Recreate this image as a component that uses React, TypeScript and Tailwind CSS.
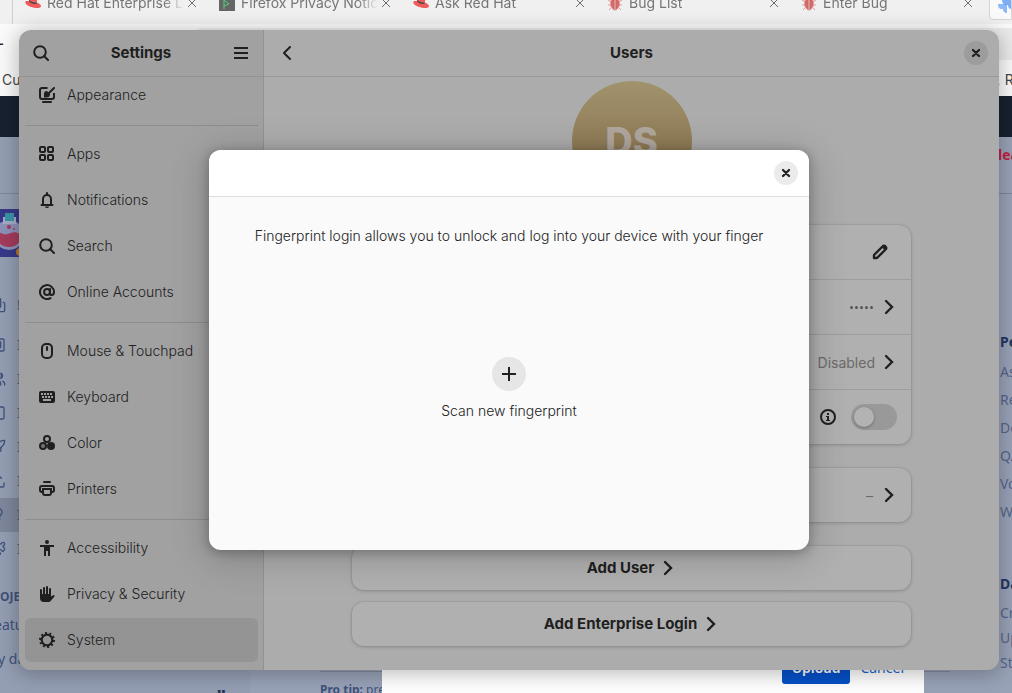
import React, { useState } from 'react';
import { Columns2, Copy, Lightbulb, Puzzle, Rocket, SquareKanban, Upload, Users } from 'lucide-react';

type IconProps = { className?: string };

const SearchIcon = ({ className = "w-4 h-4" }: IconProps) => (
    <svg className={className} viewBox="0 0 16 16" fill="none" stroke="currentColor" strokeWidth={2}>
        <circle cx="7" cy="7" r="5.8" />
        <path d="M11 11l4 4" strokeLinecap="round" />
    </svg>
);

const MenuIcon = () => (
    <svg className="w-4 h-4" viewBox="0 0 16 16" fill="currentColor">
        <path d="M1 2h14v2H1zM1 7h14v2H1zM1 12h14v2H1z" />
    </svg>
);

const BackIcon = () => (
    <svg className="w-4 h-4" viewBox="0 0 16 16" fill="none" stroke="currentColor" strokeWidth={2} strokeLinecap="round" strokeLinejoin="round">
        <path d="M11 2L5 8l6 6" />
    </svg>
);

const NextIcon = () => (
    <svg className="w-4 h-4" viewBox="0 0 16 16" fill="none" stroke="currentColor" strokeWidth={2.4} strokeLinecap="round" strokeLinejoin="miter">
        <path d="M5 2l6 6-6 6" />
    </svg>
);

const CloseIcon = () => (
    <svg className="w-4 h-4" viewBox="0 0 16 16" fill="none" stroke="currentColor" strokeWidth={2.3} strokeLinecap="round">
        <path d="M5 5l6 6M11 5l-6 6" />
    </svg>
);

const AppearanceIcon = () => (
    <svg className="w-4 h-4" viewBox="0 0 16 16" fill="none" stroke="currentColor" strokeWidth={2}>
        <path d="M8.500 1H3a2 2 0 0 0-2 2v7a2 2 0 0 0 2 2h10a2 2 0 0 0 2-2V6" />
        <path d="M4 15h8" strokeLinecap="round" />
        <path d="M9.500 6.500l5.500-5.500" strokeLinecap="round" />
        <path d="M8 4a3 3 0 0 0-3 3v3.500h2.500a3.500 3.500 0 0 0 3.500-3.500z" fill="currentColor" stroke="none" />
    </svg>
);

const AppsIcon = () => (
    <svg className="w-4 h-4" viewBox="0 0 16 16" fill="none" stroke="currentColor" strokeWidth={2}>
        <rect x="1" y="1" width="5" height="5" rx="1" />
        <rect x="9" y="1" width="5" height="5" rx="1" />
        <rect x="1" y="9" width="5" height="5" rx="1" />
        <rect x="9" y="9" width="5" height="5" rx="1" />
    </svg>
);

const BellIcon = () => (
    <svg className="w-4 h-4" viewBox="0 0 16 16" fill="none" stroke="currentColor" strokeWidth={2}>
        <path d="M4 12V7a4 4 0 0 1 8 0v5" />
        <path d="M2.500 13h11" strokeLinecap="round" />
        <path d="M8 1v1" strokeLinecap="round" />
        <path d="M6 14.500h4a2 1.500 0 0 1-4 0z" fill="currentColor" stroke="none" />
    </svg>
);

const AtIcon = () => (
    <svg className="w-4 h-4" viewBox="0 0 16 16" fill="none" stroke="currentColor" strokeWidth={2}>
        <circle cx="8" cy="8" r="2.900" />
        <path d="M11 5v4.200c0 1.200.7 1.800 1.600 1.800 1.200 0 2.400-1 2.400-3a7 7 0 1 0-3.500 6.100" strokeLinecap="round" />
    </svg>
);

const MouseIcon = () => (
    <svg className="w-4 h-4" viewBox="0 0 16 16" fill="none" stroke="currentColor" strokeWidth={2}>
        <rect x="3" y="1" width="10" height="14" rx="4" />
        <path d="M8 4v3" strokeLinecap="round" />
    </svg>
);

const KeyboardIcon = () => (
    <svg className="w-4 h-4" viewBox="0 0 16 16" fill="currentColor" fillRule="evenodd">
        <path d="M2 2h12a2 2 0 0 1 2 2v8a2 2 0 0 1-2 2H2a2 2 0 0 1-2-2V4a2 2 0 0 1 2-2zM2 4v2h2V4zM5 4v2h2V4zM8 4v2h2V4zM11 4v2h2V4zM3 7v2h2V7zM6 7v2h2V7zM9 7v2h2V7zM12 7v2h2V7zM4 10v2h8v-2z" />
    </svg>
);

const ColorIcon = () => (
    <svg className="w-4 h-4" viewBox="0 0 16 16" fill="none" stroke="currentColor" strokeWidth={2}>
        <circle cx="8" cy="4" r="3" />
        <circle cx="4" cy="11" r="3" fill="currentColor" fillOpacity={0.35} />
        <circle cx="12" cy="11" r="3" fill="currentColor" />
    </svg>
);

const PrinterIcon = () => (
    <svg className="w-4 h-4" viewBox="0 0 16 16" fill="none" stroke="currentColor" strokeWidth={2}>
        <path d="M5 1h6" strokeLinecap="round" />
        <path d="M3 11a2 2 0 0 1-2-2V7a2 2 0 0 1 2-2h10a2 2 0 0 1 2 2v2a2 2 0 0 1-2 2" />
        <path d="M4 8h8v4a2 2 0 0 1-2 2H6a2 2 0 0 1-2-2z" />
    </svg>
);

const AccessibilityIcon = () => (
    <svg className="w-4 h-4" viewBox="0 0 16 16" fill="currentColor">
        <circle cx="8" cy="2" r="2" />
        <path d="M1 5h14v2h-4v9H9v-5H7v5H5V7H1z" />
    </svg>
);

const HandIcon = () => (
    <svg className="w-4 h-4" viewBox="0 0 16 16" fill="none" stroke="currentColor" strokeWidth={2} strokeLinecap="round">
        <path d="M2 9V4M5 9V2M8 9V1M11 9V3" />
        <path d="M1 8h11v2.500L14.500 9c1 0 1.500.8.8 1.700L12 14.500c-.8 1-1.500 1.500-3 1.500H5a4 4 0 0 1-4-4z" fill="currentColor" stroke="none" />
    </svg>
);

const GearIcon = () => (
    <svg className="w-4 h-4" viewBox="0 0 16 16" fill="none" stroke="currentColor">
        <circle cx="8" cy="8" r="5.300" strokeWidth={2.2} />
        <circle cx="8" cy="8" r="7" strokeWidth={2} strokeDasharray="2 2.398" />
    </svg>
);

const PencilIcon = () => (
    <svg className="w-4 h-4" viewBox="0 0 16 16" fill="none" stroke="currentColor" strokeWidth={2.4} strokeLinejoin="round">
        <path d="M2 14v-3l8.500-8.500a2.100 2.100 0 0 1 3 3L5 14z" />
        <path d="M9.500 3l3.500 3.500 2-2.500-2.500-2.500z" fill="currentColor" stroke="none" />
    </svg>
);

const InfoIcon = () => (
    <svg className="w-4 h-4" viewBox="0 0 16 16" fill="none" stroke="currentColor" strokeWidth={2}>
        <circle cx="8" cy="8" r="7" />
        <path d="M7 4h2v2H7zM6 7h3v4h1v1H6v-1h1V8H6z" fill="currentColor" stroke="none" />
    </svg>
);

const HatIcon = () => (
    <svg className="w-4 h-4 shrink-0" viewBox="0 0 16 16">
        <path d="M4 6l1-4c.4-1 1.400-1 2.600-.5l3.600 1.300c1 .4 1.200 1 1 2l-.4 2.600C14.500 8.500 16 9.800 16 11c0 1.500-2 2.200-5 2C6 12.600.3 10 .2 7.300 0 6.200 1.700 5.700 4 6z" fill="#f05a5a" />
        <path d="M4 6c1 2 4 3.500 7.500 2.800l.3-1.400c-3 .6-6-.6-7.500-2.600z" fill="#4a4a4a" />
    </svg>
);

const BugIcon = () => (
    <svg className="w-4 h-4 shrink-0" viewBox="0 0 16 16" fill="none" stroke="#e69a9a" strokeWidth={1}>
        <path d="M5 4L2 1M11 4l3-3M4 7L1 5M12 7l3-2M4 10H1M12 10h3M5 12l-3 3M11 12l3 3" />
        <ellipse cx="8" cy="8.500" rx="4.500" ry="6.500" fill="#cf6a6a" />
        <path d="M8 3v11" stroke="#eeb5b5" />
    </svg>
);

const TerminalIcon = () => (
    <svg className="w-4 h-4 shrink-0" viewBox="0 0 16 16">
        <rect width="16" height="16" fill="#666" />
        <path d="M5 4v10M5 5l5 4-5 2" stroke="#4fd07a" fill="none" />
    </svg>
);

const FlaskLogo = () => (
    <svg className="w-12 h-12" viewBox="0 0 48 48">
        <rect width="48" height="48" fill="#38388a" />
        <circle cx="37" cy="26" r="15" fill="#8d92b8" />
        <path d="M31 8h13v7H31z" fill="#a5acc8" />
        <path d="M33 4h9v8h-9z" fill="#3b95a6" />
        <path d="M23 25c5-4 8 2 13 0s8-3 13 1c0 8-5 12-12 12s-13-5-14-13z" fill="#a33c5c" />
        <circle cx="37" cy="18" r="2" fill="#a33c5c" />
        <circle cx="42" cy="20" r="1" fill="#a33c5c" />
        <circle cx="48" cy="43" r="4" fill="#b9752b" />
    </svg>
);

const JiraLogo = () => (
    <svg className="w-5 h-5 shrink-0" viewBox="0 0 20 20" fill="#5b9bf5">
        <path d="M9 1h10v10c-3 0-4-2-4-4h-2c-3 0-4-3-4-6z" />
        <path d="M4 6h10v10c-3 0-4-2-4-4H8c-3 0-4-3-4-6z" opacity=".8" />
        <path d="M0 11h9v9c-3 0-4-2-4-4H4c-3 0-4-2-4-5z" opacity=".7" />
    </svg>
);

const tabs = [
    { title: "Red Hat Enterprise L", icon: HatIcon },
    { title: "Firefox Privacy Notic", icon: TerminalIcon },
    { title: "Ask Red Hat", icon: HatIcon },
    { title: "Bug List", icon: BugIcon },
    { title: "Enter Bug", icon: BugIcon }
];

const projectLinks = [SquareKanban, Users, Columns2, Rocket, Upload, Lightbulb, Puzzle];

const panels = [
    [{ name: "Appearance", icon: AppearanceIcon }],
    [
        { name: "Apps", icon: AppsIcon },
        { name: "Notifications", icon: BellIcon },
        { name: "Search", icon: SearchIcon },
        { name: "Online Accounts", icon: AtIcon }
    ],
    [
        { name: "Mouse & Touchpad", icon: MouseIcon },
        { name: "Keyboard", icon: KeyboardIcon },
        { name: "Color", icon: ColorIcon },
        { name: "Printers", icon: PrinterIcon }
    ],
    [
        { name: "Accessibility", icon: AccessibilityIcon },
        { name: "Privacy & Security", icon: HandIcon },
        { name: "System", icon: GearIcon }
    ]
];

function BrowserPage() {
    return (
        <div className="flex h-screen flex-col overflow-hidden bg-white">
            {/* Tab strip */}
            <div className="-mt-2 flex h-8 shrink-0 bg-[#f0f0f0] text-sm leading-6 text-[#757575]">
                <div className="w-[13px] shrink-0 border-r border-[#cfcfcf]" />
                {tabs.map((tab) => (
                    <div key={tab.title} className="flex h-[22px] w-[194px] shrink-0 items-center pl-3">
                        <tab.icon />
                        <span className="ml-[6px] flex-1 overflow-hidden whitespace-nowrap [mask-image:linear-gradient(to_right,black_85%,transparent)]">{tab.title}</span>
                        <button aria-label="Close tab" className="flex h-4 w-4 shrink-0 items-center justify-center mr-[7px]">
                            <svg className="h-2 w-2" viewBox="0 0 8 8" stroke="#6d6d6d" fill="none"><path d="M0 0l8 8M8 0L0 8" /></svg>
                        </button>
                    </div>
                ))}
                <div className="ml-[6px] h-7 flex-1 overflow-hidden rounded-bl border border-[#d5d5d5] bg-[#fafafa] pl-2">
                    <JiraLogo />
                </div>
            </div>
            {/* Address bar */}
            <div className="flex h-9 shrink-0 items-center bg-[#fafafa] pt-1">
                <span className="-ml-1 w-[199px] text-lg leading-8 text-[#222]">-</span>
                <div className="h-8 flex-1 rounded-l-md bg-[#ebebeb]" />
            </div>
            {/* Bookmarks */}
            <div className="flex h-9 shrink-0 items-center justify-between overflow-hidden bg-[#fafafa] pl-[2px] pt-1 text-sm text-[#444]">
                <span>Cu</span>
                <span className="w-4 whitespace-nowrap"><b className="text-[#d02030]">,</b> R</span>
            </div>
            <div className="h-[41px] shrink-0 bg-[#172130]" />
            <div className="flex min-h-0 flex-1 bg-[#98a2b7] font-['Noto_Sans',sans-serif] text-sm text-[#3f5279]">
                <aside className="w-[250px] shrink-0 bg-[#949eb3]">
                    <div className="h-[57px] border-b border-[#7d879c]" />
                    <div className="-ml-7 mt-[15px] h-12"><FlaskLogo /></div>
                    <div className="mt-[31px] flex h-[34px] items-center">
                        <Copy className="-ml-[10px] h-4 w-4 rotate-180" /><span className="ml-[11px]">!</span>
                    </div>
                    <ul className="pt-[6px]">
                        {projectLinks.map((Icon, i) => (
                            <li key={i} className={i === 5 ? "flex h-[34px] items-center bg-[#7e879c]" : "flex h-[34px] items-center"}>
                                <Icon className="-ml-[10px] h-4 w-4" fill={i === 1 ? "currentColor" : "none"} />
                                <span className="ml-[11px]">I</span>
                            </li>
                        ))}
                    </ul>
                    <h3 className="mt-[21px] text-xs font-bold leading-[20px]">OJE</h3>
                    <a href="#" className="-ml-[6px] mt-[6px] block leading-6">eatu</a>
                    <a href="#" className="-ml-[2px] mt-[10px] block leading-6">y da</a>
                    <div className="mt-[14px] flex justify-end pr-6 text-xl font-bold leading-6 text-[#26355a]">"</div>
                </aside>
                <main className="flex min-w-0 flex-1 flex-col justify-end">
                    <div className="flex items-end pl-[70px] pr-[50px]">
                        <p className="h-[22px] w-[62px] overflow-hidden whitespace-nowrap border-t border-[#7d879c] pt-[10px] text-xs leading-4"><b>Pro tip:</b> pre</p>
                        <div className="flex flex-1 items-start justify-end gap-[10px] bg-white pb-[9px] pr-[20px]">
                            <button className="h-8 rounded-[3px] bg-[#0550c8] px-[10px] font-semibold text-white">Upload</button>
                            <button className="h-8 text-[#1a68c4]">Cancel</button>
                        </div>
                        <div className="h-[22px] w-[26px] border-t border-[#7d879c]" />
                    </div>
                </main>
                <aside className="w-3 shrink-0 whitespace-nowrap text-[#56658a]">
                    <div className="-ml-[2px] h-[57px] border-b border-[#7d879c] pt-2 font-bold leading-5 text-[#c02040]">lea</div>
                    <h3 className="mt-[138px] font-bold leading-5 text-[#233662]">Pe</h3>
                    <ul className="mt-[6px] leading-7">
                        <li>As</li>
                        <li>Re</li>
                        <li>De</li>
                        <li>QA</li>
                        <li>Vo</li>
                        <li>W</li>
                    </ul>
                    <h3 className="mt-[48px] font-bold leading-5 text-[#233662]">Da</h3>
                    <ul className="mt-[6px] leading-[25px]">
                        <li>Cr</li>
                        <li>Up</li>
                        <li>St</li>
                    </ul>
                </aside>
            </div>
        </div>
    );
}

function Sidebar() {
    return (
        <aside className="flex w-[245px] shrink-0 flex-col border-r border-[#929292] bg-[#a1a1a1]">
            <header className="flex h-[47px] shrink-0 items-center justify-between border-b border-[#929292] px-[14px]">
                <button aria-label="Search settings"><SearchIcon /></button>
                <h1 className="text-[15px] font-bold">Settings</h1>
                <button aria-label="Main menu"><MenuIcon /></button>
            </header>
            <nav className="min-h-0 flex-1 overflow-hidden pl-[6px] pr-[5px]">
                <div className="-mt-[5px]">
                    {panels.map((group, i) => (
                        <ul key={i} className={i > 0 ? "mt-[7px] border-t border-[#8d8d8d] pt-[5px]" : ""}>
                            {group.map((panel) => (
                                <li key={panel.name} className="py-px">
                                    <a
                                        href="#"
                                        className={`flex h-11 items-center gap-3 rounded-md pl-[14px] ${panel.name === "System" ? "bg-[#949494]" : ""}`}
                                    >
                                        <panel.icon />
                                        <span className="pb-[2px] font-light text-[#222]">{panel.name}</span>
                                    </a>
                                </li>
                            ))}
                        </ul>
                    ))}
                </div>
            </nav>
        </aside>
    );
}

function UserPanel() {
    const [autoLogin, setAutoLogin] = useState(false);

    return (
        <section className="flex min-w-0 flex-1 flex-col bg-[#acacac]">
            <header className="flex h-[47px] shrink-0 items-center justify-between border-b border-[#999] px-[11px]">
                <button aria-label="Back" className="flex h-6 w-6 items-center justify-center"><BackIcon /></button>
                <h2 className="text-[15px] font-bold">Users</h2>
                <button aria-label="Close" className="flex h-6 w-6 items-center justify-center rounded-full bg-[#9c9c9c]"><CloseIcon /></button>
            </header>
            <div className="mx-auto min-h-0 w-full max-w-[559px] flex-1 pt-1">
                <div className="mx-auto mb-6 flex h-[120px] w-[120px] items-center justify-center rounded-full bg-linear-to-b from-[#a1936d] to-[#806844] text-[38px] font-extrabold text-[#b0a79f]">
                    DS
                </div>
                <div className="mb-6 divide-y divide-[#9d9d9d] rounded-xl bg-[#b0b0b0] shadow-[0_0_0_1px_rgba(0,0,0,0.04),0_1px_3px_1px_rgba(0,0,0,0.12)]">
                    <div className="flex h-[55px] items-center justify-end pr-[23px]">
                        <button aria-label="Edit name"><PencilIcon /></button>
                    </div>
                    <button aria-label="Password" className="flex h-[55px] w-full items-center justify-end gap-[6px] pr-[14px] text-[#6a6a6a]">
                        <span className="flex gap-[2px] pr-[2px]">
                            {[0, 1, 2, 3, 4].map((n) => <i key={n} className="h-[3px] w-[3px] rounded-full bg-[#555]" />)}
                        </span>
                        <span className="text-[#222]"><NextIcon /></span>
                    </button>
                    <button className="flex h-[55px] w-full items-center justify-end gap-[6px] pr-[14px] text-[#6a6a6a]">
                        <span>Disabled</span>
                        <span className="text-[#222]"><NextIcon /></span>
                    </button>
                    <div className="flex h-[54px] items-center justify-end gap-[15px] pr-[14px]">
                        <button aria-label="About automatic login"><InfoIcon /></button>
                        <input
                            type="checkbox"
                            role="switch"
                            aria-label="Automatic login"
                            checked={autoLogin}
                            onChange={(e) => setAutoLogin(e.target.checked)}
                            className="h-[26px] w-[46px] appearance-none rounded-full bg-[#999] p-[3px] before:block before:h-5 before:w-5 before:rounded-full before:bg-[#b3b3b3] before:shadow-[0_1px_3px_rgba(0,0,0,0.3)] checked:before:ml-5"
                        />
                    </div>
                </div>
                <button className="mb-6 flex h-[54px] w-full items-center justify-end gap-2 rounded-xl bg-[#b0b0b0] pr-[14px] shadow-[0_0_0_1px_rgba(0,0,0,0.04),0_1px_3px_1px_rgba(0,0,0,0.12)]">
                    <span className="text-[#6a6a6a]">–</span>
                    <NextIcon />
                </button>
                <button className="mb-3 flex h-11 w-full items-center justify-center gap-[6px] rounded-xl bg-[#b0b0b0] text-[15px] font-bold shadow-[0_0_0_1px_rgba(0,0,0,0.04),0_1px_3px_1px_rgba(0,0,0,0.12)]">
                    Add User <NextIcon />
                </button>
                <button className="flex h-11 w-full items-center justify-center gap-[6px] rounded-xl bg-[#b0b0b0] text-[15px] font-bold shadow-[0_0_0_1px_rgba(0,0,0,0.04),0_1px_3px_1px_rgba(0,0,0,0.12)]">
                    Add Enterprise Login <NextIcon />
                </button>
            </div>
        </section>
    );
}

function FingerprintDialog() {
    return (
        <div role="dialog" aria-label="Fingerprint login" className="flex h-full max-h-[400px] w-full max-w-[600px] flex-col overflow-hidden rounded-xl bg-[#fafafa] text-[#222] shadow-[0_2px_10px_2px_rgba(0,0,0,0.2),0_6px_36px_4px_rgba(0,0,0,0.18)]">
            <header className="flex h-[47px] shrink-0 items-center justify-end border-b border-[#dedede] bg-white pr-[11px]">
                <button aria-label="Close" className="flex h-6 w-6 items-center justify-center rounded-full bg-[#ebebeb]"><CloseIcon /></button>
            </header>
            <p className="mt-[29px] text-center font-light leading-5">Fingerprint login allows you to unlock and log into your device with your finger</p>
            <div className="mt-[111px] flex justify-center">
                <button className="flex flex-col items-center gap-[10px] font-light leading-5">
                    <span className="flex h-[34px] w-[34px] items-center justify-center rounded-full bg-[#e6e6e6]">
                        <svg className="h-4 w-4" viewBox="0 0 16 16" fill="#222"><path d="M7 1h2v6h6v2H9v6H7V9H1V7h6z" /></svg>
                    </span>
                    <span>Scan new fingerprint</span>
                </button>
            </div>
        </div>
    );
}

export default function App() {
    return (
        <div className="relative min-h-screen overflow-hidden font-[Inter,sans-serif] text-[14px] text-[#1f1f1f]">
            <BrowserPage />
            {/* Settings window */}
            <div className="absolute bottom-[23px] left-[19px] right-[13px] top-[30px] rounded-xl shadow-[0_3px_20px_2px_rgba(0,0,0,0.25)]">
                <div className="flex h-full overflow-hidden rounded-xl">
                    <Sidebar />
                    <UserPanel />
                </div>
                <div className="absolute inset-0 flex items-center justify-center overflow-hidden rounded-xl">
                    <FingerprintDialog />
                </div>
            </div>
        </div>
    );
}
